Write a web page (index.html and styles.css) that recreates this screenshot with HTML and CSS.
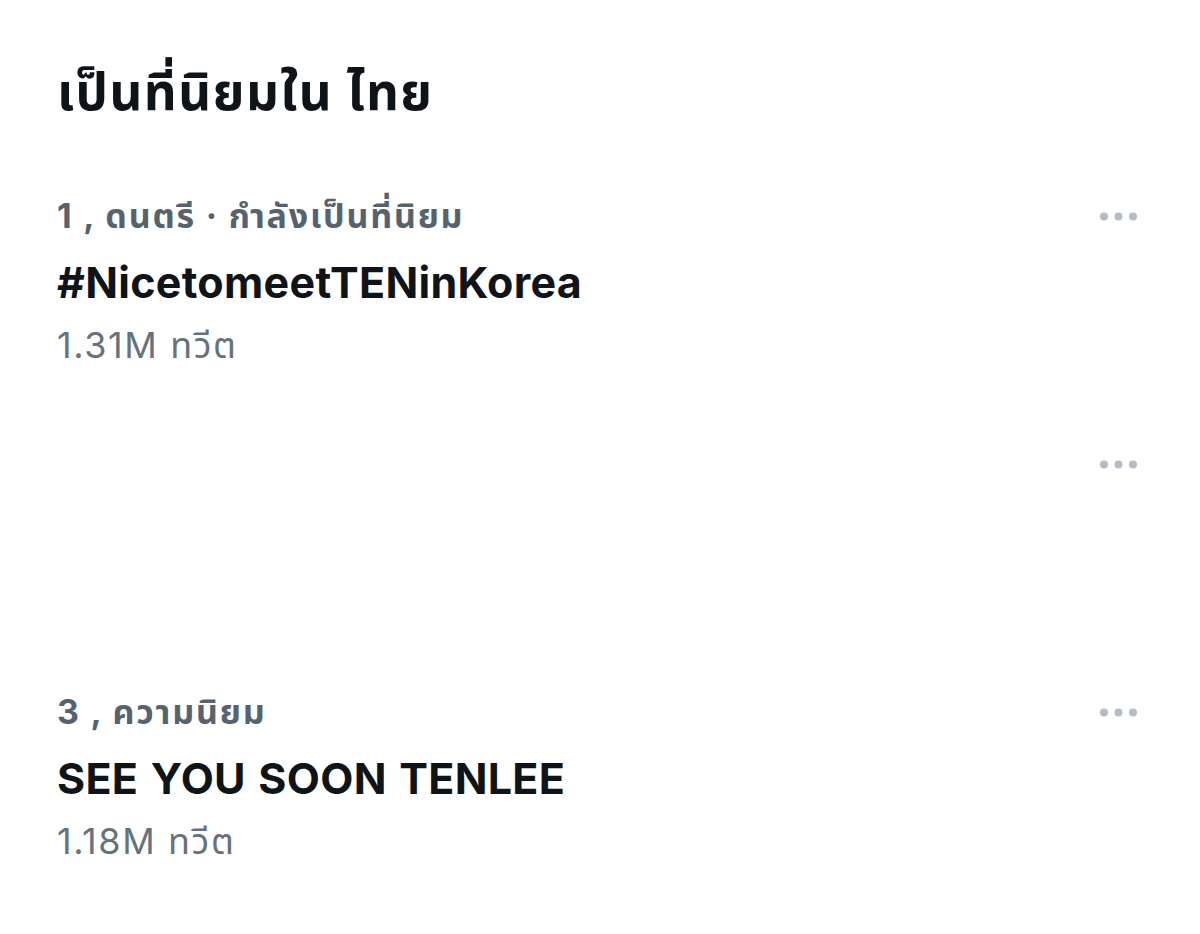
FILE: index.html
```html
<!DOCTYPE html>
<html lang="th">
<head>
<meta charset="utf-8">
<title>เป็นที่นิยมใน ไทย</title>
<link rel="stylesheet" href="styles.css">
</head>
<body>
<main class="page">
  <h1 class="title">เป็นที่นิยมใน ไทย</h1>

  <section class="trend">
    <div class="trend-text">
      <div class="cat"><span class="rank">1</span> , ดนตรี · กำลังเป็นที่นิยม</div>
      <div class="name">#NicetomeetTENinKorea</div>
      <div class="count">1.31M ทวีต</div>
    </div>
    <button class="more" aria-label="เพิ่มเติม">
      <svg width="37" height="9" viewBox="0 0 37 9"><circle cx="4" cy="4.5" r="4"/><circle cx="18.5" cy="4.5" r="4"/><circle cx="33" cy="4.5" r="4"/></svg>
    </button>
  </section>

  <section class="trend">
    <div class="trend-text"></div>
    <button class="more" aria-label="เพิ่มเติม">
      <svg width="37" height="9" viewBox="0 0 37 9"><circle cx="4" cy="4.5" r="4"/><circle cx="18.5" cy="4.5" r="4"/><circle cx="33" cy="4.5" r="4"/></svg>
    </button>
  </section>

  <section class="trend">
    <div class="trend-text">
      <div class="cat"><span class="rank">3</span> , ความนิยม</div>
      <div class="name">SEE YOU SOON TENLEE</div>
      <div class="count">1.18M ทวีต</div>
    </div>
    <button class="more" aria-label="เพิ่มเติม">
      <svg width="37" height="9" viewBox="0 0 37 9"><circle cx="4" cy="4.5" r="4"/><circle cx="18.5" cy="4.5" r="4"/><circle cx="33" cy="4.5" r="4"/></svg>
    </button>
  </section>
</main>
</body>
</html>
```

FILE: styles.css
```css
html, body {
  margin: 0;
  padding: 0;
  background: #ffffff;
}
body {
  font-family: "Inter", "Noto Sans Thai", "Noto Sans", "Liberation Sans", sans-serif;
  color: #0f1419;
  overflow: hidden;
  height: 934px;
}
.page {
  padding: 0 63px 0 57px;
}
.title {
  margin: 0;
  padding-top: 60px;
  height: 140px;
  box-sizing: border-box;
  font-size: 51px;
  font-weight: 700;
  line-height: 64px;
  letter-spacing: 1.5px;
}
.trend {
  display: flex;
  justify-content: space-between;
  align-items: flex-start;
  height: 248px;
  padding-top: 54px;
  box-sizing: border-box;
}
.trend:nth-of-type(3) {
  height: 246px;
}
.trend-text {
  display: flex;
  flex-direction: column;
}
.cat {
  font-size: 34px;
  font-weight: 700;
  line-height: 44px;
  letter-spacing: 1.8px;
  color: #56636e;
}
.name {
  margin-top: 16px;
  font-size: 43px;
  font-weight: 700;
  line-height: 56px;
  letter-spacing: 0.3px;
  word-spacing: 2px;
  color: #0f1419;
}
.count {
  margin-top: 13px;
  font-size: 36px;
  font-weight: 400;
  line-height: 44px;
  letter-spacing: 1.6px;
  color: #66727c;
}
.more {
  border: 0;
  background: none;
  padding: 0;
  margin-top: 18px;
  display: flex;
}
.more svg { fill: #b4bcc4; }
```
